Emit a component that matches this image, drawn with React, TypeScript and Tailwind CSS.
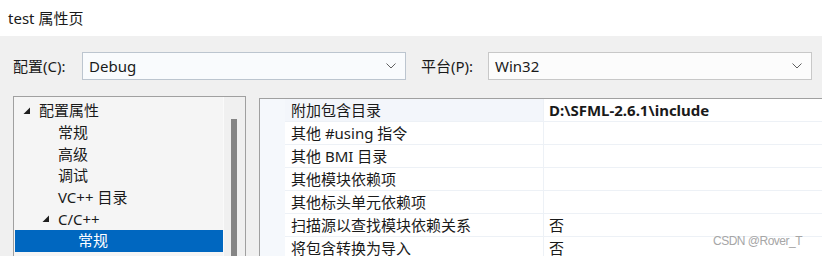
const treeItems = [
  { label: '配置属性', level: 0, expander: true },
  { label: '常规', level: 1 },
  { label: '高级', level: 1 },
  { label: '调试', level: 1 },
  { label: 'VC++ 目录', level: 1 },
  { label: 'C/C++', level: 1, expander: true },
  { label: '常规', level: 2, selected: true },
];

const props = [
  { name: '附加包含目录', value: 'D:\\SFML-2.6.1\\include', bold: true, active: true },
  { name: '其他 #using 指令', value: '' },
  { name: '其他 BMI 目录', value: '' },
  { name: '其他模块依赖项', value: '' },
  { name: '其他标头单元依赖项', value: '' },
  { name: '扫描源以查找模块依赖关系', value: '否' },
  { name: '将包含转换为导入', value: '否' },
];

function Chevron() {
  return (
    <svg width="10" height="6" viewBox="0 0 10 6" className="shrink-0">
      <path d="M0.5 0.5 L5 5 L9.5 0.5" fill="none" stroke="#606060" strokeWidth="1" />
    </svg>
  );
}

function Expander() {
  return (
    <svg width="8" height="8" viewBox="0 0 8 8" className="shrink-0">
      <path d="M7 0.5 L7 7 L0.5 7 Z" fill="#1e1e1e" />
    </svg>
  );
}

function Combo({ value, tone }: { value: string; tone: 'blue' | 'gray' }) {
  return (
    <div
      className={`w-[324px] h-[28px] flex items-center justify-between pl-[6px] pr-[9px] border ${
        tone === 'blue' ? 'border-[#bcc5cf] bg-[#f9fbfd]' : 'border-[#c8c8c8] bg-[#fcfcfc]'
      }`}
    >
      <span className="text-[15px] text-[#1a1a1a] leading-none">{value}</span>
      <Chevron />
    </div>
  );
}

export default function App() {
  return (
    <div
      className="relative w-[822px] h-[256px] overflow-hidden bg-[#f0f0f0] text-[#1a1a1a]"
      style={{ fontFamily: '"Noto Sans", "Noto Sans CJK SC", sans-serif' }}
    >
      {/* 标题栏 */}
      <div className="h-[36px] bg-white flex items-center pl-[8px] text-[15px] leading-none">test 属性页</div>

      {/* 配置 & 平台 */}
      <div className="flex items-center pt-[16px] h-[44px]">
        <span className="pl-[13px] w-[82px] text-[15px] leading-none">配置(C):</span>
        <Combo value="Debug" tone="blue" />
        <span className="pl-[15px] w-[82px] text-[15px] leading-none">平台(P):</span>
        <Combo value="Win32" tone="gray" />
      </div>

      <div className="flex items-start pt-[16px]">
        {/* 树 */}
        <div className="ml-[13px] w-[233px] h-[170px] border border-[#a0a0a0] bg-[#f5f5f5] flex">
          <div className="flex-1 pt-[3px] pl-[1px]">
            {treeItems.map((item, i) => (
              <div
                key={i}
                className={`h-[21.7px] flex items-center text-[15px] leading-none ${
                  item.selected ? 'bg-[#0067c0] text-white' : ''
                }`}
              >
                <div
                  className={`flex items-center justify-end pr-[8px] ${
                    item.level === 0 ? 'w-[24px]' : item.level === 1 ? 'w-[43px]' : 'w-[63px]'
                  }`}
                >
                  {item.expander && <Expander />}
                </div>
                <span>{item.label}</span>
              </div>
            ))}
          </div>
          <div className="w-[22px] border-l border-[#fafafa] bg-[#f0f0f0] pt-[22px] pl-[7px]">
            <div className="w-[6px] h-[140px] bg-[#858585]" />
          </div>
        </div>

        {/* 属性网格 */}
        <div className="ml-[13px] mt-[2px] flex-1 h-[170px] border-l border-t border-[#a0a0a0] bg-[#f5f8fc] pl-[25px]">
          {props.map((p, i) => (
            <div key={i} className="h-[23px] flex text-[15px] leading-none">
              <div
                className={`w-[258px] flex items-center pl-[6px] border-b border-[#edf1f6] ${
                  p.active ? 'bg-[#f3f6fb]' : 'bg-white'
                }`}
              >
                {p.name}
              </div>
              <div className="flex-1 flex items-center pl-[5px] bg-white border-b border-l border-[#edf1f6]">
                <span className={p.bold ? 'font-bold' : ''}>{p.value}</span>
              </div>
            </div>
          ))}
        </div>
      </div>

      <span className="absolute left-[713px] top-[235px] text-[12px] leading-none tracking-[-0.5px] text-[#a6a6a6] font-['Liberation_Sans',sans-serif]">
        CSDN @Rover_T
      </span>
    </div>
  );
}
